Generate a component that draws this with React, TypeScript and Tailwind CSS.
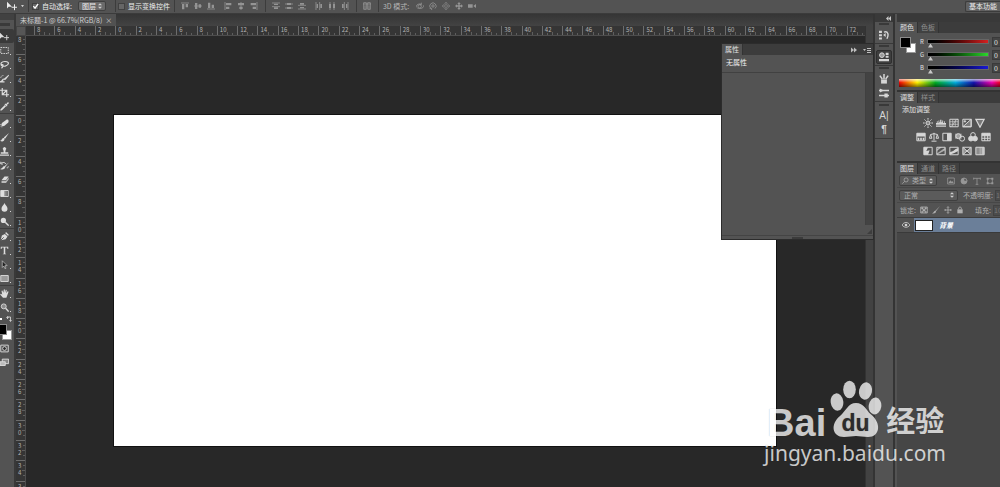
import type { ReactNode } from "react";
import clsx from "clsx";

/* ── Icons ─────────────────────────────────────────────────────────────── */

interface GlyphProps {
  children: ReactNode;
  className?: string;
}

/** 12x12 drawing, stroked in the current colour. */
function Glyph({ children, className = "size-[10px]" }: GlyphProps) {
  return (
    <svg
      viewBox="0 0 12 12"
      fill="none"
      stroke="currentColor"
      strokeWidth={1.2}
      aria-hidden="true"
      className={clsx("shrink-0", className)}
    >
      {children}
    </svg>
  );
}

const solid = { fill: "currentColor", stroke: "none" };

const moveIcon = (
  <>
    <path d="M0 1v8l2-2 4 0z" {...solid} />
    <path d="M9 4v7M5.500 7.500h7" />
  </>
);

const toolGroups: { name: string; icon: ReactNode }[][] = [
  [
    { name: "移动工具", icon: moveIcon },
    { name: "矩形选框工具", icon: <path d="M1 2h10v8H1z" strokeDasharray="2 1.2" /> },
    {
      name: "套索工具",
      icon: <path d="M3 8C-.5 5 2 2 6.500 2S12 4 10.500 6 5 9 3 8s-2-2 0-2 1 3-1 5" strokeWidth={1.5} />,
    },
    {
      name: "快速选择工具",
      icon: (
        <>
          <path d="M11.500 1 6 5.500 4.500 8l3-.5L12 2z" {...solid} />
          <path d="M5 7c-2 0-1 3-5 3.500h6" strokeWidth={1.8} />
          <path d="M1 5c0-2 2-3 4-3" strokeDasharray="1.5 1" />
        </>
      ),
    },
    { name: "裁剪工具", icon: <path d="M3 0v9h9M0 3h9v9M3 9l6-6" strokeWidth={1.5} /> },
    {
      name: "吸管工具",
      icon: (
        <>
          <path d="m7 2 1 1 2-2.500c1-1 2.500.5 1.500 1.500L9 4l1 1-1 1-3-3z" {...solid} />
          <path d="M7 4.500 2 9.500.8 11.200 2.500 10 7.500 5" strokeWidth={1.5} />
        </>
      ),
    },
  ],
  [
    {
      name: "污点修复画笔工具",
      icon: (
        <>
          <path d="M3 5 8.500 1c2-1 4 1 2.500 3.500L6 9C3 11 0 8 3 5z" {...solid} />
          <path d="M.5 7c-1 2 1 4 3 3.500" strokeDasharray="1 1" />
        </>
      ),
    },
    {
      name: "画笔工具",
      icon: (
        <>
          <path d="M12 0 5 6l1.500 2z" {...solid} />
          <path d="M5 6.500C2 6.500 3 10 0 10c2 2 6 1.500 6-2z" {...solid} />
        </>
      ),
    },
    {
      name: "仿制图章工具",
      icon: <path d="M4.500 4a2.200 2.200 0 1 1 3 0L7 7h4v2H1V7h4zM0 10h12v1.500H0z" {...solid} />,
    },
    {
      name: "历史记录画笔工具",
      icon: (
        <>
          <path d="M12 1.500 6 7l1 1zM6 7c-3 0-2 3-6 3.500 3 1.500 7 .5 7-2.500z" {...solid} />
          <path d="M1 3c3-2 6-1 7 1M1 1v3h3" />
          <path d="M9 9c1 .5 2 0 2-2" />
        </>
      ),
    },
    {
      name: "橡皮擦工具",
      icon: (
        <>
          <path d="M6 2h5.500L8 7H2z" {...solid} />
          <path d="M2 8h6l3.500-5v3L8 10.500H2z" {...solid} opacity={0.75} />
        </>
      ),
    },
    {
      name: "渐变工具",
      icon: (
        <>
          <path d="M1 2h10v8H1z" />
          <path d="M6 2h3v8H6z" fill="currentColor" stroke="none" opacity={0.4} />
          <path d="M1 2h5v8H1z" {...solid} />
        </>
      ),
    },
    { name: "模糊工具", icon: <path d="M6 0c1 3 4 4.500 4 7.500a4 4 0 0 1-8 0C2 4.500 5 3 6 0z" {...solid} /> },
    {
      name: "减淡工具",
      icon: (
        <>
          <circle cx={4.5} cy={4.5} r={3.5} {...solid} />
          <path d="m7 7 4.500 4.500" strokeWidth={1.8} />
        </>
      ),
    },
  ],
  [
    {
      name: "钢笔工具",
      icon: (
        <>
          <path d="m8 0 4 4-1.500 1L7 1.500zM6.500 2.500 10 6 7.500 9.500 1 11l1.500-6.500z" {...solid} />
          <path d="m1 11 4-4" stroke="#535353" />
        </>
      ),
    },
    { name: "横排文字工具", icon: <path d="M1 1h10v3h-1L9.500 2H7v8l1.500 1h-5L5 10V2H2.500L2 4H1z" {...solid} /> },
    { name: "路径选择工具", icon: <path d="M3 1v9l2-2 1.500 3.500L8 11 6.500 7.500h3z" fill="#222" strokeWidth={0.8} /> },
    { name: "矩形工具", icon: <path d="M1 2h10v8H1z" fill="#9a9a9a" /> },
  ],
  [
    {
      name: "抓手工具",
      icon: (
        <path
          d="M4 11.500.5 7.500c-.6-1 .5-1.800 1.400-1L3 7.500 2 2.700c0-1 1.200-1.200 1.500-.2l1 2.500L5 1c0-1 1.500-1 1.500 0v4l1-3.500c.3-1 1.600-.6 1.400.4L8.300 5.500 10 3.300c.7-.7 1.700 0 1.200 1L9.500 9l-1 2.500z"
          {...solid}
        />
      ),
    },
    {
      name: "缩放工具",
      icon: (
        <>
          <circle cx={5} cy={4.5} r={3.3} fill="#8b8b8b" />
          <path d="m7.500 7 4 4.500" strokeWidth={1.8} />
        </>
      ),
    },
  ],
];

const alignTop = (
  <>
    <path d="M0 1.500h12" />
    <path d="M1.500 3h3.500v8H1.500zM7 3h3.500v5H7z" {...solid} />
  </>
);
const alignMiddle = (
  <>
    <path d="M0 6h12" />
    <path d="M1.500 1.500h3.500v9H1.500zM7 3.500h3.500v5H7z" {...solid} />
  </>
);
const alignBottom = (
  <>
    <path d="M0 10.500h12" />
    <path d="M1.500 1h3.500v8H1.500zM7 4h3.500v5H7z" {...solid} />
  </>
);
const spread = (
  <>
    <path d="M0 1.500h12M0 7h12" />
    <path d="M3 2.500h6v2H3zM3 8h6v2.500H3z" {...solid} />
  </>
);
const spreadMid = (
  <>
    <path d="M0 3h12M0 9h12" />
    <path d="M3 1.500h6v3H3zM3 7.500h6v3H3z" {...solid} />
  </>
);

const alignGroups: ReactNode[][] = [
  [
    alignTop,
    alignMiddle,
    alignBottom,
  ],
  [
    <g key="l" transform="matrix(0 1 1 0 0 0)">{alignTop}</g>,
    <g key="c" transform="matrix(0 1 1 0 0 0)">{alignMiddle}</g>,
    <g key="r" transform="matrix(0 1 1 0 0 0)">{alignBottom}</g>,
  ],
];

const spreadGroups: ReactNode[][] = [
  [
    spread,
    spreadMid,
    <g key="b" transform="matrix(1 0 0 -1 0 12)">{spread}</g>,
  ],
  [
    <g key="l" transform="matrix(0 1 1 0 0 0)">{spread}</g>,
    <g key="c" transform="matrix(0 1 1 0 0 0)">{spreadMid}</g>,
    <g key="r" transform="matrix(0 -1 -1 0 12 12)">{spread}</g>,
  ],
];

const modeIcons: ReactNode[] = [
  <g key="rotate">
    <circle cx={5.5} cy={6.5} r={2.5} />
    <path d="M1 8C-1 5 4 1.500 8 3.500M11 5c2 4-5 6-9 4M8 1v3H5" />
  </g>,
  <g key="roll">
    <circle cx={6} cy={6} r={1.8} />
    <path d="M2.500 9.500A4.800 4.800 0 1 1 9 9.800M1 9.500h3v2.500" />
  </g>,
  <g key="drag">
    <path d="m6 0 2 2.500H7V5h2.500V4L12 6 9.500 8V7H7v2.500h1L6 12 4 9.500h1V7H2.500v1L0 6l2.500-2v1H5V2.500H4z" strokeWidth={0.8} />
  </g>,
  <g key="slide">
    <path d="m6 0 2.500 3H7v2h2V3.500L12 6 9 8.500V7H7v2h1.500L6 12 3.500 9H5V7H3v1.500L0 6l3-2.500V5h2V3H3.500z" {...solid} />
  </g>,
  <g key="camera">
    <path d="M0 3.500h7v5H0zM8 6l4-3v6z" {...solid} />
  </g>,
];

const box = <path d="M1 1.500h10v9H1z" />;

const adjustmentRows: { name: string; icon: ReactNode }[][] = [
  [
    {
      name: "亮度/对比度",
      icon: (
        <>
          <circle cx={6} cy={6} r={2.4} fill="#888" />
          <path d="M6 0v2M6 10v2M0 6h2M10 6h2M1.800 1.800l1.400 1.400M8.800 8.800l1.400 1.400M1.800 10.200l1.400-1.400M8.800 3.200l1.400-1.400" />
        </>
      ),
    },
    { name: "色阶", icon: <path d="M0 8V6h1V4h1v2h1V3h1v2h1V2h1.500v3h1V3h1v3h1V4h1v2H12v2zM0 9h12v1.500H0z" {...solid} /> },
    { name: "曲线", icon: <>{box}<path d="M1 10.500C6 10 6 2 11 1.500M4.500 2v8M7.500 2v8M1 4.500h10M1 7.500h10" strokeWidth={0.8} /></> },
    { name: "曝光度", icon: <>{box}<path d="M1 10.500 11 1.500V10.500zM2 4h3M3.500 2.500v3" /><path d="m1 10.500 10-9v9z" {...solid} opacity={0.3} /></> },
    { name: "自然饱和度", icon: <path d="M1 1.500h10L6 11z" fill="#777" strokeWidth={1.5} /> },
  ],
  [
    { name: "色相/饱和度", icon: <>{box}<path d="M1 1.500h10v4H1zM2 7h2v3H2zM5 7h2v3H5zM8 7h2v3H8z" {...solid} /></> },
    { name: "色彩平衡", icon: <path d="M6 1v9M3 11h6M2 3l4-1 4 1M2 3 .5 7.500h3zM10 3 8.500 7.500h3z" /> },
    { name: "黑白", icon: <>{box}<path d="M6 1.500h5v9H6z" {...solid} /></> },
    { name: "照片滤镜", icon: <><path d="M0 2h8v6H0z" {...solid} opacity={0.6} /><circle cx={4} cy={5} r={3} /><circle cx={8.5} cy={8} r={3} /></> },
    { name: "通道混合器", icon: <><circle cx={6} cy={3.5} r={2.8} /><circle cx={3.5} cy={8} r={2.8} fill="currentColor" /><circle cx={8.5} cy={8} r={2.8} fill="currentColor" /></> },
    { name: "颜色查找", icon: <>{box}<path d="M4.500 1.500v9M8 1.500v9M1 4.500h10M1 7.500h10" /><path d="M1 1.500h10v3H1z" {...solid} /></> },
  ],
  [
    { name: "反相", icon: <>{box}<path d="M1 10.500V1.500h5L4 6l4-1-2 5.500z" {...solid} /></> },
    { name: "色调分离", icon: <>{box}<path d="M1 9 11 2v3L1 10.500zM1 6l6-4.500H4L1 4z" {...solid} opacity={0.7} /></> },
    { name: "阈值", icon: <>{box}<path d="M1 7.500 5 6l3-2.500 3-1V6L7 8l-6 2.500z" {...solid} /></> },
    { name: "可选颜色", icon: <>{box}<path d="m1 1.500 10 9M11 1.500l-10 9" /><path d="m1 1.500 5 4.500-5 4.500zM11 1.500 6 6l5 4.500z" {...solid} opacity={0.5} /></> },
    { name: "渐变映射", icon: <>{box}<path d="M1 1.500h4v9H1z" {...solid} opacity={0.45} /><path d="M5 1.500h3v9H5z" {...solid} opacity={0.65} /><path d="M8 1.500h3v9H8z" {...solid} opacity={0.85} /></> },
  ],
];

const dockGroups: { name: string; icon: ReactNode; pressed?: boolean }[][] = [
  [
    {
      name: "历史记录",
      icon: (
        <>
          <path d="M0 1h3.500v2.500H0zM0 5h3.500v2.500H0zM0 9h3.500v2.500H0zM5 6l3-2.500v5z" {...solid} />
          <path d="M6 2.500c5-1.500 6 3 3.500 8" strokeWidth={1.7} />
        </>
      ),
    },
  ],
  [
    {
      name: "属性",
      pressed: true,
      icon: (
        <>
          <circle cx={3.5} cy={3.8} r={2.8} fill="#999" />
          <path d="M8 1h3.500v2.500H8zM8 4.500h3.500V7H8zM0 8.500h12V11H0z" {...solid} />
        </>
      ),
    },
  ],
  [
    {
      name: "画笔预设",
      icon: (
        <>
          <path d="M2.500 6.500h7v5h-7z" {...solid} />
          <path d="M4 6 1 2M6 6V0M8 6l3-4" strokeWidth={1.8} />
        </>
      ),
    },
    {
      name: "画笔",
      icon: (
        <>
          <path d="M0 3h12M0 9h12" strokeWidth={1.6} />
          <path d="M1 .5 6 3 1 5.500zM6.500 6.500h4v5h-4z" {...solid} />
        </>
      ),
    },
  ],
];

/* ── Options bar ───────────────────────────────────────────────────────── */

function Separator() {
  return <span className="h-3 w-px shrink-0 bg-[#3c3c3c]" />;
}

function SortArrows() {
  return (
    <svg viewBox="0 0 6 8" aria-hidden="true" className="pointer-events-none absolute right-1 h-1.5 w-1 fill-[#d0d0d0]">
      <path d="m3 0 3 3H0zM3 8 0 5h6z" />
    </svg>
  );
}

function IconRow({ icons, className }: { icons: ReactNode[]; className?: string }) {
  return (
    <div className={clsx("flex text-[#949494]", className)}>
      {icons.map((icon, i) => (
        <button key={i} type="button" className="flex w-[13px] justify-center">
          <Glyph className="size-2">{icon}</Glyph>
        </button>
      ))}
    </div>
  );
}

function CheckOption({ label, checked }: { label: string; checked?: boolean }) {
  return (
    <label className="flex items-center gap-[3px]">
      <span className="relative flex size-[7px]">
        <input
          type="checkbox"
          defaultChecked={checked}
          className="peer size-[7px] appearance-none border border-[#414141] bg-[#666]"
        />
        <svg viewBox="0 0 8 8" className="pointer-events-none absolute inset-0 hidden fill-none stroke-white stroke-[1.5] peer-checked:block">
          <path d="m1.500 3.500 2 2.500L7 1" />
        </svg>
      </span>
      {label}
    </label>
  );
}

function OptionsBar() {
  return (
    <header className="flex h-[14px] shrink-0 items-center border-b border-[#3b3b3b] bg-[#535353] pb-px pl-[7px] whitespace-nowrap text-[#ededed]">
      <Glyph>{moveIcon}</Glyph>
      <svg viewBox="0 0 4 3" className="mr-1 ml-1 w-[3px] fill-[#ccc]"><path d="M0 0h4L2 3z" /></svg>
      <Separator />
      <div className="mr-1.5 ml-[3px]">
        <CheckOption label="自动选择:" checked />
      </div>
      <span className="relative mr-[9px] flex items-center">
        <select aria-label="自动选择" className="h-[10px] w-7 appearance-none rounded-[2px] border border-[#3f3f3f] bg-[#6a6a6a] pl-[3px] leading-none">
          <option>图层</option>
          <option>组</option>
        </select>
        <SortArrows />
      </span>
      <Separator />
      <div className="mr-1 ml-[2px]">
        <CheckOption label="显示变换控件" />
      </div>
      <Separator />
      <IconRow icons={alignGroups[0]} className="ml-1" />
      <IconRow icons={alignGroups[1]} className="mx-1" />
      <Separator />
      <IconRow icons={spreadGroups[0]} className="ml-1" />
      <IconRow icons={spreadGroups[1]} className="mx-1" />
      <Separator />
      <IconRow
        className="mx-1"
        icons={[<path key="auto" d="M1 1h4v10H1zM7 1h4v10H7zM0 3h12M3 5v6M9 5v6" />]}
      />
      <Separator />
      <span className="mr-1 ml-1 text-[#b5b5b5]">3D 模式:</span>
      <IconRow icons={modeIcons} />
      <button type="button" className="ml-auto h-[11px] rounded-l-[2px] border border-r-0 border-[#3c3c3c] bg-[#616161] px-[3px] leading-none">
        基本功能
      </button>
    </header>
  );
}

/* ── Tool strip ────────────────────────────────────────────────────────── */

function ToolStrip() {
  return (
    <aside className="flex w-4 shrink-0 flex-col overflow-hidden border-r-2 border-[#393939] bg-[#535353] text-[#dedede]">
      <div className="flex h-[15px] shrink-0 flex-col justify-end bg-[#414141]">
        <div className="flex h-[9px] items-center bg-[#535353]">
          <span className="h-[3px] w-[10px] bg-[#3a3a3a]" />
        </div>
      </div>
      {toolGroups.map((group, g) => (
        <div key={g} className={clsx("flex flex-col", g > 0 && "border-t border-[#3e3e3e]", g === 1 && "pt-0.5")}>
          {group.map(({ name, icon }, i) => (
            <button
              key={name}
              type="button"
              aria-label={name}
              className={clsx(
                "relative flex h-[14px] items-center",
                g === 0 && i === 0 && "rounded-r-[2px] bg-[#3a3a3a]",
              )}
            >
              <Glyph className="size-[9px]">{icon}</Glyph>
              {(g > 0 || i > 0) && <span className="absolute right-[3px] bottom-[2px] size-px bg-[#d5d5d5]" />}
            </button>
          ))}
        </div>
      ))}
      <div className="flex h-[9px] items-center gap-1 text-[#cfcfcf]">
        <span className="size-[2px] bg-white" />
        <Glyph className="size-[6px]">
          <path d="M3 6V2h6v8M1 4l2-3 2 3M7 8l2 3 2-3" strokeWidth={1.8} />
        </Glyph>
      </div>
      <Swatches className="-ml-1 mt-px mb-px" />
      <button type="button" aria-label="快速蒙版" className="flex h-[14px] items-center">
        <Glyph className="size-[9px]"><path d="M1 1.500h10v9H1z" /><circle cx={6} cy={6} r={2.5} fill="#282828" /></Glyph>
      </button>
      <button type="button" aria-label="屏幕模式" className="flex h-[14px] items-center">
        <Glyph className="size-[9px]"><path d="M3 1.500h8.500v6H3z" fill="#888" /><path d="M0 5h7v5H0z" fill="#bbb" /></Glyph>
      </button>
    </aside>
  );
}

function Swatches({ className }: { className?: string }) {
  return (
    <div className={clsx("relative size-4 shrink-0", className)}>
      <button type="button" aria-label="背景色" className="absolute right-0 bottom-0 size-[10px] border border-[#999] bg-white" />
      <button type="button" aria-label="前景色" className="absolute top-0 left-0 size-[11px] border border-[#8c8c8c] bg-black" />
    </div>
  );
}

/* ── Document window ───────────────────────────────────────────────────── */

const columns = Array.from({ length: 41 }, (_, i) => Math.abs(i * 2 - 8));
const rows = Array.from({ length: 23 }, (_, i) => Math.abs(i * 2 - 8));

function HorizontalRuler() {
  return (
    <div className="flex h-[10px] shrink-0 overflow-hidden border-b border-[#4d4d4d] bg-[#353535] pl-2">
      <div className="-mr-[2px] flex flex-1">
        {columns.map((n, i) => (
          <div key={i} className="relative flex min-w-0 flex-1 items-end border-l border-[#6c6c6c]">
            <span className="absolute top-0 left-[2px] text-[6px] leading-[8px]">{n}</span>
            <span className="h-0.5 flex-1" />
            <span className="h-0.5 flex-1 border-l border-[#5e5e5e]" />
            <span className="h-[3px] flex-1 border-l border-[#5e5e5e]" />
            <span className="h-0.5 flex-1 border-l border-[#5e5e5e]" />
          </div>
        ))}
      </div>
    </div>
  );
}

function VerticalRuler() {
  return (
    <div className="w-[10px] shrink-0 overflow-hidden border-r border-[#4d4d4d] bg-[#353535]">
      <div className="-mt-[2px] flex h-[467px] flex-col">
        {rows.map((n, i) => (
          <div key={i} className="relative flex min-h-0 flex-1 flex-col items-end border-t border-[#6c6c6c]">
            <span className="absolute top-px left-[2px] w-1 text-[6px] leading-[7px] break-all">{n}</span>
            <span className="w-0.5 flex-1" />
            <span className="w-0.5 flex-1 border-t border-[#5e5e5e]" />
            <span className="w-[3px] flex-1 border-t border-[#5e5e5e]" />
            <span className="w-0.5 flex-1 border-t border-[#5e5e5e]" />
          </div>
        ))}
      </div>
    </div>
  );
}

function DocumentWindow() {
  return (
    <main className="flex min-w-0 flex-1 flex-col text-[#b4b4b4]">
      <div className="flex h-3 shrink-0 bg-linear-to-b from-[#353535] to-[#434343]">
        <div className="flex items-center gap-[3px] bg-[#515151] px-1 text-[#cfcfcf]">
          <span>未标题-1 @ 66.7%(RGB/8)</span>
          <button type="button" aria-label="关闭">×</button>
        </div>
      </div>
      <div className="flex min-h-0 flex-1">
        <div className="flex w-[10px] shrink-0 flex-col">
          <div className="h-[10px] shrink-0 border border-[#444] bg-[#565656]" />
          <VerticalRuler />
        </div>
        <div className="flex min-w-0 flex-1 flex-col">
          <HorizontalRuler />
          <div className="flex-1 bg-[#282828] pt-[79px] pl-[88px]">
            <div className="aspect-2/1 w-[662px] bg-white shadow-[0_0_0_1px_#111]" />
          </div>
        </div>
        <div className="w-2 shrink-0 border-l border-[#333] bg-[#424242]" />
      </div>
    </main>
  );
}

/* ── Right side panels ─────────────────────────────────────────────────── */

function Tabs({ names }: { names: string[] }) {
  return (
    <div role="tablist" className="flex h-[11px] shrink-0 bg-[#3c3c3c] leading-none">
      {names.map((name, i) => (
        <button
          key={name}
          type="button"
          role="tab"
          aria-selected={i === 0}
          className={clsx(
            "border-r border-[#333] px-[3px]",
            i === 0 ? "bg-[#535353] text-[#e0e0e0]" : "bg-[#414141] text-[#8e8e8e]",
          )}
        >
          {name}
        </button>
      ))}
    </div>
  );
}

function PropertiesPanel() {
  return (
    <section className="absolute top-[29px] right-[126px] flex h-[197px] w-[153px] flex-col border border-[#2c2c2c] bg-[#535353]">
      <div className="flex items-center bg-[#3c3c3c] pr-0.5">
        <div className="flex-1"><Tabs names={["属性"]} /></div>
        <svg viewBox="0 0 20 6" className="h-[6px] w-5 fill-[#bdbdbd]">
          <path d="M0 0.500 3 3 0 5.500zM3 .5 6 3 3 5.500zM12 2h3l-1.500 2zM16 1h4v1h-4zM16 3h4v1h-4zM16 5h4v1h-4z" />
        </svg>
      </div>
      <h2 className="border-b border-[#414141] px-1 pt-[2px] pb-1 leading-[11px] text-[#f0f0f0]">无属性</h2>
      <div className="flex flex-1 justify-end">
        <div className="mb-2.5 w-2 border-l border-[#404040] bg-[#434343]" />
      </div>
      <div className="flex h-1 shrink-0 items-center justify-center border-t border-[#444]">
        <span className="h-0.5 w-[11px] bg-[#3b3b3b]" />
      </div>
      <svg viewBox="0 0 6 6" className="absolute right-px bottom-[5px] size-[5px] fill-[#3d3d3d]"><path d="M6 0v6H0z" /></svg>
    </section>
  );
}

function Grip() {
  return <span className="mb-[3px] h-[2px] w-[10px] bg-[#393939]" />;
}

function Dock() {
  return (
    <nav aria-label="面板" className="flex w-[22px] shrink-0 flex-col border-x-2 border-[#343434] bg-[#535353] text-[#d6d6d6]">
      <div className="flex h-2 items-center justify-end bg-[#393939] pr-[2px]">
        <svg viewBox="0 0 6 6" className="size-[5px] fill-[#c8c8c8]"><path d="M3 0v6L0 3zM6 0v6L3 3z" /></svg>
      </div>
      {dockGroups.map((group, i) => (
        <div key={i} className="flex flex-col items-center border-b border-[#393939] pt-px pb-px">
          <Grip />
          {group.map(({ name, icon, pressed }) => (
            <button
              key={name}
              type="button"
              aria-label={name}
              className={clsx(
                "flex h-[14px] w-4 items-center justify-center rounded-[2px]",
                pressed && "border border-[#2e2e2e] bg-[#3e3e3e]",
              )}
            >
              <Glyph>{icon}</Glyph>
            </button>
          ))}
        </div>
      ))}
      <div className="flex flex-col items-center border-b border-[#393939] pt-[2px] pb-px">
        <Grip />
        <button type="button" aria-label="字符" className="h-[14px] font-[Liberation_Sans] text-[10px] leading-none">A|</button>
        <button type="button" aria-label="段落" className="h-[14px] font-[Liberation_Sans] text-[10px] leading-none font-bold">¶</button>
      </div>
    </nav>
  );
}

const channels = [
  { name: "R", track: "from-black to-[#d42020]" },
  { name: "G", track: "from-black to-[#2bd62b]" },
  { name: "B", track: "from-black to-[#1a1ad4]" },
];

function ColorPanel() {
  return (
    <section className="border-b-2 border-[#333]">
      <Tabs names={["颜色", "色板"]} />
      <div className="flex gap-1 pt-[3px] pl-[3px]">
        <Swatches className="mt-px" />
        <div className="flex flex-1 flex-col gap-[2px]">
          {channels.map(({ name, track }) => (
            <div key={name} className="flex h-[11px] items-center">
              <label htmlFor={`slider-${name}`} className="w-2 text-[6px]">{name}</label>
              <input
                id={`slider-${name}`}
                type="range"
                min={0}
                max={255}
                defaultValue={0}
                className={clsx(
                  "h-[3px] w-[60px] appearance-none bg-linear-to-r outline-1 outline-[#666]",
                  "[&::-webkit-slider-thumb]:mt-2 [&::-webkit-slider-thumb]:h-1 [&::-webkit-slider-thumb]:w-[5px]",
                  "[&::-webkit-slider-thumb]:appearance-none [&::-webkit-slider-thumb]:bg-[#c9c9c9]",
                  "[&::-webkit-slider-thumb]:[clip-path:polygon(50%_0,100%_100%,0_100%)]",
                  track,
                )}
              />
              <input
                aria-label={`${name} 值`}
                defaultValue="0"
                className="ml-1 h-[10px] min-w-0 flex-1 border border-r-0 border-[#3a3a3a] bg-[#444] pl-px leading-none"
              />
            </div>
          ))}
        </div>
      </div>
      <div className="mt-1.5 mb-[3px] ml-[2px] h-2 bg-[linear-gradient(to_bottom,rgba(255,255,255,0.7),transparent_45%,rgba(0,0,0,0.5)),linear-gradient(to_right,#e00_0%,#fe0_18%,#0a2_36%,#0ad_56%,#11a_74%,#e0a_92%,#e02)]" />
    </section>
  );
}

function AdjustmentsPanel() {
  return (
    <section className="border-b-2 border-[#333]">
      <Tabs names={["调整", "样式"]} />
      <h2 className="px-[5px] pt-px leading-[10px]">添加调整</h2>
      <div className="flex w-[113px] flex-col items-center pt-0.5 pb-[3px] text-[#d6d6d6]">
        {adjustmentRows.map((row, i) => (
          <div key={i} className="flex h-[14px] items-center gap-[3px]">
            {row.map(({ name, icon }) => (
              <button key={name} type="button" aria-label={name}>
                <Glyph>{icon}</Glyph>
              </button>
            ))}
          </div>
        ))}
      </div>
    </section>
  );
}

function LayersPanel() {
  return (
    <section className="flex flex-1 flex-col text-[#b0b0b0]">
      <Tabs names={["图层", "通道", "路径"]} />
      <div className="flex h-[13px] shrink-0 items-center pl-[2px]">
        <span className="relative mr-2.5 flex items-center">
          <Glyph className="absolute left-[3px] size-[7px]"><circle cx={7} cy={5} r={3.5} /><path d="m4.500 7.500-4 4" /></Glyph>
          <select aria-label="图层筛选" className="h-[11px] w-[38px] appearance-none rounded-[2px] border border-[#3f3f3f] bg-[#5b5b5b] pl-3 leading-none">
            <option>类型</option>
          </select>
          <SortArrows />
        </span>
        <div className="flex gap-[5px] text-[#979797]">
          <Glyph className="size-2">{box}<path d="m2 9 3-4 2 2 1-1 2 3z" {...solid} /></Glyph>
          <Glyph className="size-2"><circle cx={6} cy={6} r={4.5} fill="currentColor" /><path d="M6 2v4h4.500A4.500 4.500 0 0 0 6 2z" fill="#444" /></Glyph>
          <Glyph className="size-2"><path d="M1 2h10M6 2v9M1 1v3M11 1v3M4 11h4" /></Glyph>
          <Glyph className="size-2"><path d="M2.500 2.500h7v7h-7z" /><path d="M1 1h3v3H1zM8 1h3v3H8zM1 8h3v3H1zM8 8h3v3H8z" {...solid} /></Glyph>
        </div>
      </div>
      <div className="flex h-4 shrink-0 items-center border-y border-[#474747] pl-[2px] whitespace-nowrap">
        <span className="relative mr-[5px] flex items-center">
          <select aria-label="混合模式" className="h-[11px] w-[59px] appearance-none rounded-[2px] border border-[#3f3f3f] bg-[#5b5b5b] pl-1 leading-none">
            <option>正常</option>
          </select>
          <SortArrows />
        </span>
        <label htmlFor="opacity">不透明度:</label>
        <input id="opacity" defaultValue="100%" className="ml-[2px] h-[11px] min-w-0 flex-1 border border-r-0 border-[#424242] bg-[#4c4c4c] text-[#777]" />
      </div>
      <div className="flex h-[14px] shrink-0 items-center gap-1 pl-[3px] whitespace-nowrap">
        <span>锁定:</span>
        <Glyph className="size-2">{box}<path d="M2 2h3v3H2zM7 2h3v3H7zM4 5h4v3H4zM2 8h3v2H2zM7 8h3v2H7z" {...solid} /></Glyph>
        <Glyph className="size-2"><path d="M12 0 5 7l1 1zM5 7c-2 0-2 3-5 4 3 1 6 0 6-3z" {...solid} /></Glyph>
        <Glyph className="size-2"><path d="M6 1v10M1 6h10M4.500 2.500 6 1l1.500 1.500M4.500 9.500 6 11l1.500-1.500M2.500 4.500 1 6l1.500 1.500M9.500 4.500 11 6 9.500 7.500" /></Glyph>
        <Glyph className="size-2"><path d="M2 5h8v6H2z" {...solid} /><path d="M4 5V3c0-2 4-2 4 0v2" /></Glyph>
        <label htmlFor="fill" className="ml-auto">填充:</label>
        <input id="fill" defaultValue="100%" className="-ml-[2px] h-[11px] w-[7px] border border-r-0 border-[#424242] bg-[#4c4c4c] text-[#777]" />
      </div>
      <ul className="flex-1 border-t border-[#3c3c3c] bg-[#464646] text-white">
        <li className="flex h-[15px] items-center border-b border-[#3a3a3a] bg-[#535353]">
          <button type="button" aria-label="指示图层可见性" className="flex w-[17px] justify-center text-[#d4d4d4]">
            <Glyph className="size-2"><path d="M0 6c3-5 9-5 12 0-3 4.500-9 4.500-12 0z" /><circle cx={6} cy={6} r={2} {...solid} /></Glyph>
          </button>
          <div className="flex h-full flex-1 items-center gap-1.5 bg-[#6b7f99] pl-px">
            <span className="h-[11px] w-[18px] border border-[#222] bg-white" />
            <span className="font-bold italic">背景</span>
          </div>
        </li>
      </ul>
    </section>
  );
}

/* ── Watermark ─────────────────────────────────────────────────────────── */

function Watermark() {
  return (
    <div className="pointer-events-none absolute right-[54px] bottom-[19px] text-white opacity-75 [text-shadow:0_0_1px_rgba(0,0,0,0.4)]">
      <div className="flex items-end pl-[3px]">
        <span className="font-[Liberation_Sans] text-[38px] leading-[30px] font-bold">Bai</span>
        <svg viewBox="0 0 52 58" className="ml-1 h-[58px] w-[52px] fill-white">
          <ellipse cx={7} cy={22} rx={6.3} ry={8.7} transform="rotate(-8 7 22)" />
          <ellipse cx={19.5} cy={9.5} rx={6.3} ry={8.8} />
          <ellipse cx={35.5} cy={11} rx={6.5} ry={8.7} transform="rotate(12 35.5 11)" />
          <ellipse cx={45} cy={26} rx={6.3} ry={8.5} transform="rotate(8 45 26)" />
          <path d="M26 23c8 0 10 7 14.500 11C52 43 50 57 38 57c-5 0-8-1-12-1s-7 1-12 1C2 57 0 44 10 36c6-5 8-13 16-13z" />
          <text x={25.5} y={51} textAnchor="middle" className="fill-[#2c2c2c] font-[Liberation_Sans] text-[23px] font-bold">du</text>
        </svg>
        <span className="ml-1 text-[29px] leading-[37px] font-bold">经验</span>
      </div>
      <div className="font-[Noto_Sans] text-[21px] leading-[30px]">jingyan.baidu.com</div>
    </div>
  );
}

export default function App() {
  return (
    <div className="flex h-screen w-full flex-col overflow-hidden bg-[#282828] font-['Noto_Sans_CJK_SC',sans-serif] text-[7px] leading-none text-[#e0e0e0] select-none">
      <OptionsBar />
      <div className="relative flex min-h-0 flex-1">
        <ToolStrip />
        <DocumentWindow />
        <Dock />
        <div className="flex w-[105px] shrink-0 flex-col bg-[#535353] pl-[2px]">
          <div className="h-2 shrink-0 bg-[#393939]" />
          <ColorPanel />
          <AdjustmentsPanel />
          <LayersPanel />
        </div>
        <PropertiesPanel />
        <Watermark />
      </div>
    </div>
  );
}
